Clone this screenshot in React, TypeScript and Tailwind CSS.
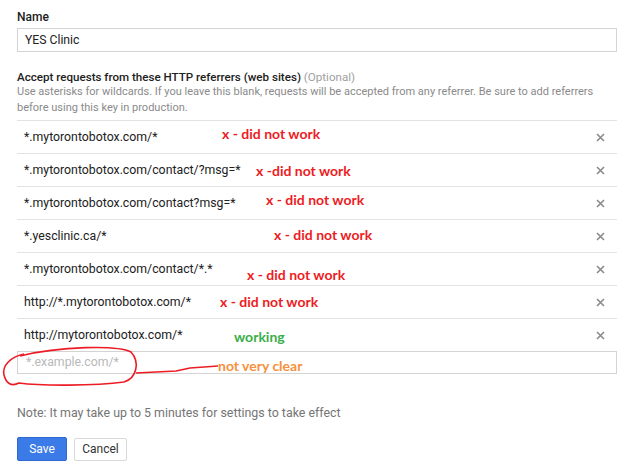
import React from "react";

type Referrer = { url: string };

const referrers: Referrer[] = [
  { url: "*.mytorontobotox.com/*" },
  { url: "*.mytorontobotox.com/contact/?msg=*" },
  { url: "*.mytorontobotox.com/contact?msg=*" },
  { url: "*.yesclinic.ca/*" },
  { url: "*.mytorontobotox.com/contact/*.*" },
  { url: "http://*.mytorontobotox.com/*" },
  { url: "http://mytorontobotox.com/*" },
];

// scribbled notes laid over the form
const notes = [
  { text: "x - did not work", cls: "left-[222px] top-[125px] text-[#ed1c24]" },
  { text: "x -did not work", cls: "left-[256px] top-[162px] text-[#ed1c24]" },
  { text: "x - did not work", cls: "left-[266px] top-[191px] text-[#ed1c24]" },
  { text: "x - did not work", cls: "left-[274px] top-[226px] text-[#ed1c24]" },
  { text: "x - did not work", cls: "left-[247px] top-[266px] text-[#ed1c24]" },
  { text: "x - did not work", cls: "left-[220px] top-[293px] text-[#ed1c24]" },
  { text: "working", cls: "left-[234px] top-[328px] text-[#3aae48]" },
  { text: "not very clear", cls: "left-[218px] top-[357px] text-[#f7913d]" },
];

function CloseIcon() {
  return (
    <svg width="9" height="9" viewBox="0 0 9 9" className="text-[#8a8a8a]">
      <path d="M1 1 L8 8 M8 1 L1 8" stroke="currentColor" strokeWidth="1.6" />
    </svg>
  );
}

export default function App() {
  return (
    <main
      className="relative h-[474px] w-[632px] overflow-hidden bg-white px-[17px] pt-[10px]"
      style={{ fontFamily: "Roboto, 'Liberation Sans', sans-serif" }}
    >
      <div className="w-[600px]">
        <label className="block text-[12px] font-medium leading-[14px] text-[#212121]">Name</label>
        <div className="mt-[4px] flex h-[24px] items-center border border-[#d4d4d4] px-[7px] text-[12.2px] text-[#212121]">
          YES Clinic
        </div>

        <h2 className="mt-[18px] text-[11.6px] font-medium leading-[14px] text-[#212121]">
          Accept requests from these HTTP referrers (web sites){" "}
          <span className="font-normal text-[#a0a0a0]">(Optional)</span>
        </h2>
        <p className="text-[11px] leading-[16px] text-[#8a8a8a]">
          Use asterisks for wildcards. If you leave this blank, requests will be accepted from any referrer. Be sure to add referrers
          before using this key in production.
        </p>

        <ul className="mt-[4px]">
          {referrers.map((r) => (
            <li
              key={r.url}
              className="flex h-[33px] items-center justify-between border-t border-[#e3e3e3] pl-[7px] pr-[12px] text-[12.3px] text-[#212121]"
            >
              <span>{r.url}</span>
              <CloseIcon />
            </li>
          ))}
        </ul>
        <div className="flex h-[23px] items-center border border-[#d4d4d4] px-[8px] text-[12.3px] text-[#b8b8b8]">
          *.example.com/*
        </div>

        <p className="mt-[31px] text-[12.4px] leading-[16px] text-[#757575]">
          Note: It may take up to 5 minutes for settings to take effect
        </p>

        <div className="mt-[16px] flex items-center gap-[7px]">
          <button className="h-[24px] w-[50px] rounded-[2px] border border-[#2f66cf] bg-[#3b7be8] text-[12px] text-white">
            Save
          </button>
          <button className="h-[23px] w-[53px] rounded-[2px] border border-[#d9d9d9] bg-white text-[12px] text-[#333]">
            Cancel
          </button>
        </div>
      </div>

      {notes.map((n, i) => (
        <span
          key={i}
          className={`absolute text-[14px] font-bold leading-[18px] ${n.cls}`}
          style={{ fontFamily: "Lato, 'Open Sans', sans-serif" }}
        >
          {n.text}
        </span>
      ))}

      <svg className="pointer-events-none absolute left-0 top-0" width="632" height="474">
        <path
          d="M24 354 C 10 357, 2 366, 4 375 C 6 383, 11 387, 19 383 C 40 386, 95 386, 124 382 C 137 378, 140 362, 131 352 C 118 345, 60 346, 20 356"
          fill="none"
          stroke="#ed1c24"
          strokeWidth="1.6"
        />
        <path d="M136 373 L 176 371 L 190 368 L 218 366" fill="none" stroke="#ed1c24" strokeWidth="1.6" />
      </svg>
    </main>
  );
}
